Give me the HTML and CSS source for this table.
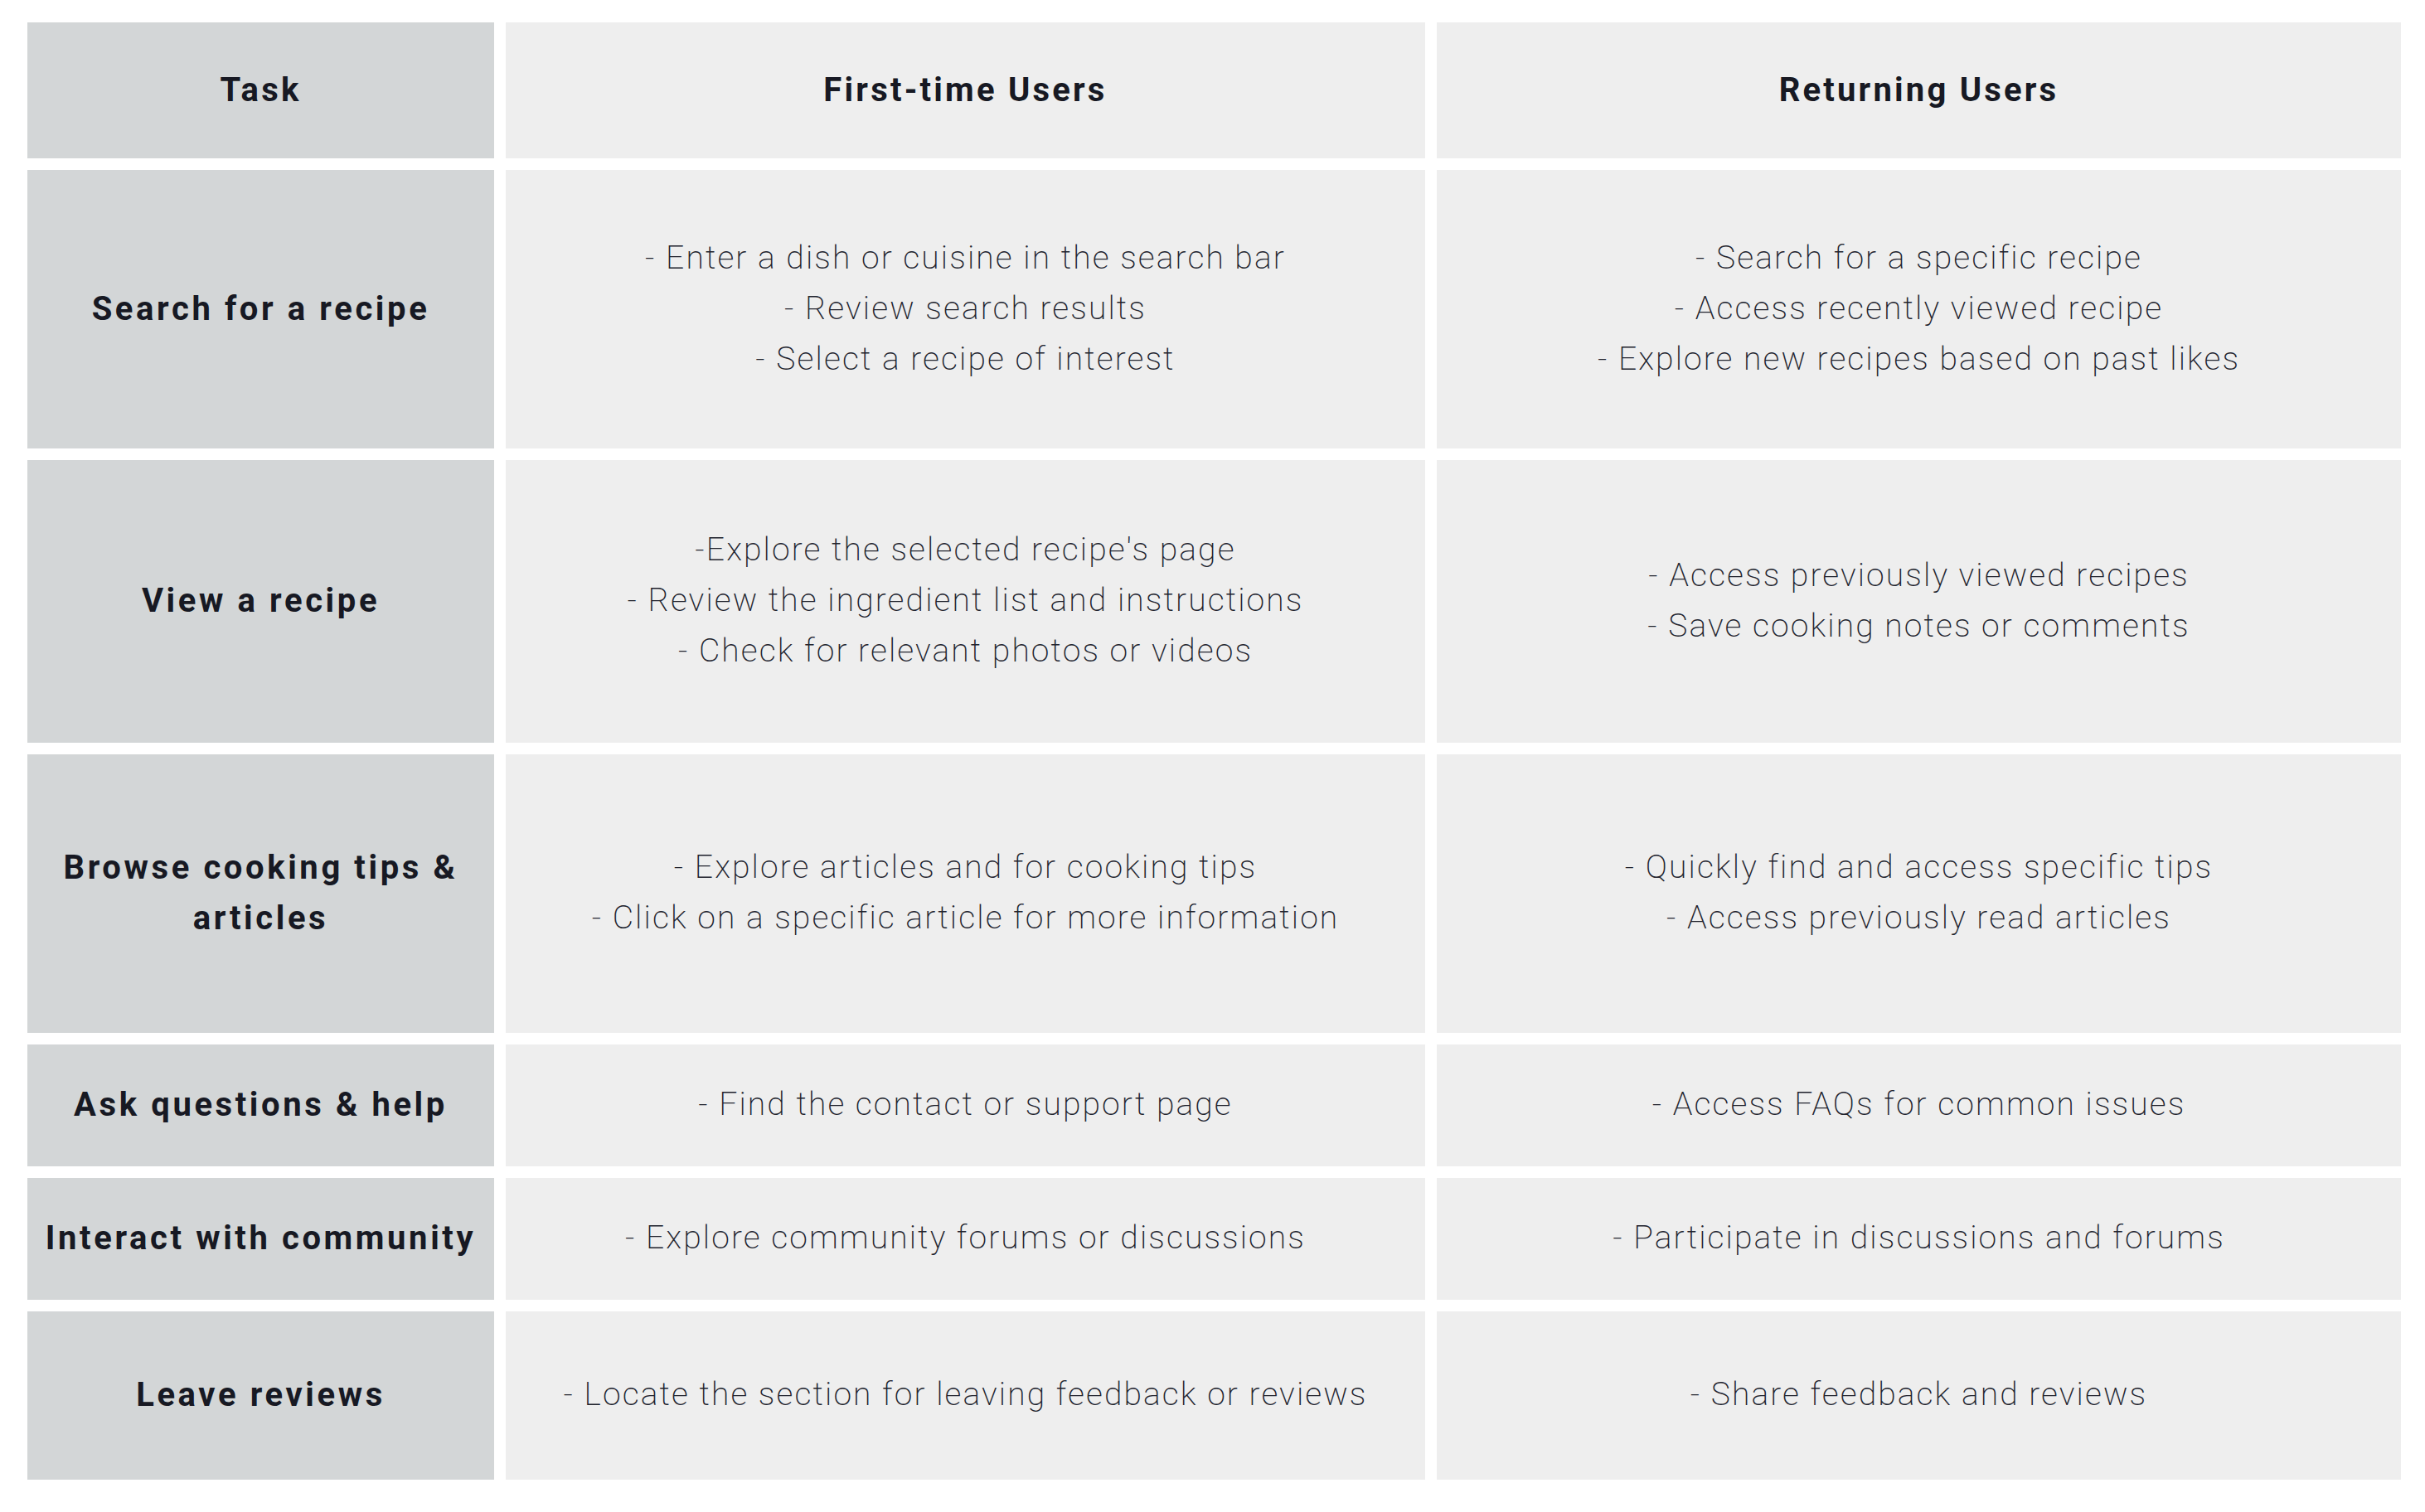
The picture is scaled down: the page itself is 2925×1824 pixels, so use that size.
FILE: index.html
```html
<!DOCTYPE html>
<html lang="en">
<head>
<meta charset="utf-8">
<title>Recipe site user tasks</title>
<link rel="stylesheet" href="styles.css">
</head>
<body>
<div class="table">
  <div class="cell task head">Task</div>
  <div class="cell head">First-time Users</div>
  <div class="cell head">Returning Users</div>

  <div class="cell task">Search for a recipe</div>
  <div class="cell body">- Enter a dish or cuisine in the search bar<br>- Review search results<br>- Select a recipe of interest</div>
  <div class="cell body">- Search for a specific recipe<br>- Access recently viewed recipe<br>- Explore new recipes based on past likes</div>

  <div class="cell task">View a recipe</div>
  <div class="cell body">-Explore the selected recipe's page<br>- Review the ingredient list and instructions<br>- Check for relevant photos or videos</div>
  <div class="cell body">- Access previously viewed recipes<br>- Save cooking notes or comments</div>

  <div class="cell task">Browse cooking tips &amp;<br>articles</div>
  <div class="cell body">- Explore articles and for cooking tips<br>- Click on a specific article for more information</div>
  <div class="cell body">- Quickly find and access specific tips<br>- Access previously read articles</div>

  <div class="cell task">Ask questions &amp; help</div>
  <div class="cell body">- Find the contact or support page</div>
  <div class="cell body">- Access FAQs for common issues</div>

  <div class="cell task">Interact with community</div>
  <div class="cell body">- Explore community forums or discussions</div>
  <div class="cell body">- Participate in discussions and forums</div>

  <div class="cell task">Leave reviews</div>
  <div class="cell body">- Locate the section for leaving feedback or reviews</div>
  <div class="cell body">- Share feedback and reviews</div>
</div>
</body>
</html>
```

FILE: styles.css
```css
html, body {
  margin: 0;
  padding: 0;
  background: #ffffff;
}

body {
  padding: 27px 28px 0 33px;
  font-family: Roboto, "Liberation Sans", sans-serif;
  color: #171923;
}

.table {
  display: grid;
  grid-template-columns: 563px 1109px 1163px;
  grid-template-rows: 164px 336px 341px 336px 147px 147px 203px;
  gap: 14px;
}

.cell {
  display: flex;
  align-items: center;
  justify-content: center;
  text-align: center;
  background: #eeeeee;
}

.task {
  background: #d3d6d7;
  font-weight: 700;
  font-size: 40px;
  letter-spacing: 3.6px;
  line-height: 61px;
  padding-bottom: 2px;
}

.head {
  font-weight: 700;
  font-size: 40px;
  letter-spacing: 3.2px;
  padding-bottom: 2px;
}

.body {
  font-weight: 200;
  font-size: 39px;
  line-height: 61px;
  letter-spacing: 2.1px;
  color: #22242e;
  padding-bottom: 2px;
}
```
